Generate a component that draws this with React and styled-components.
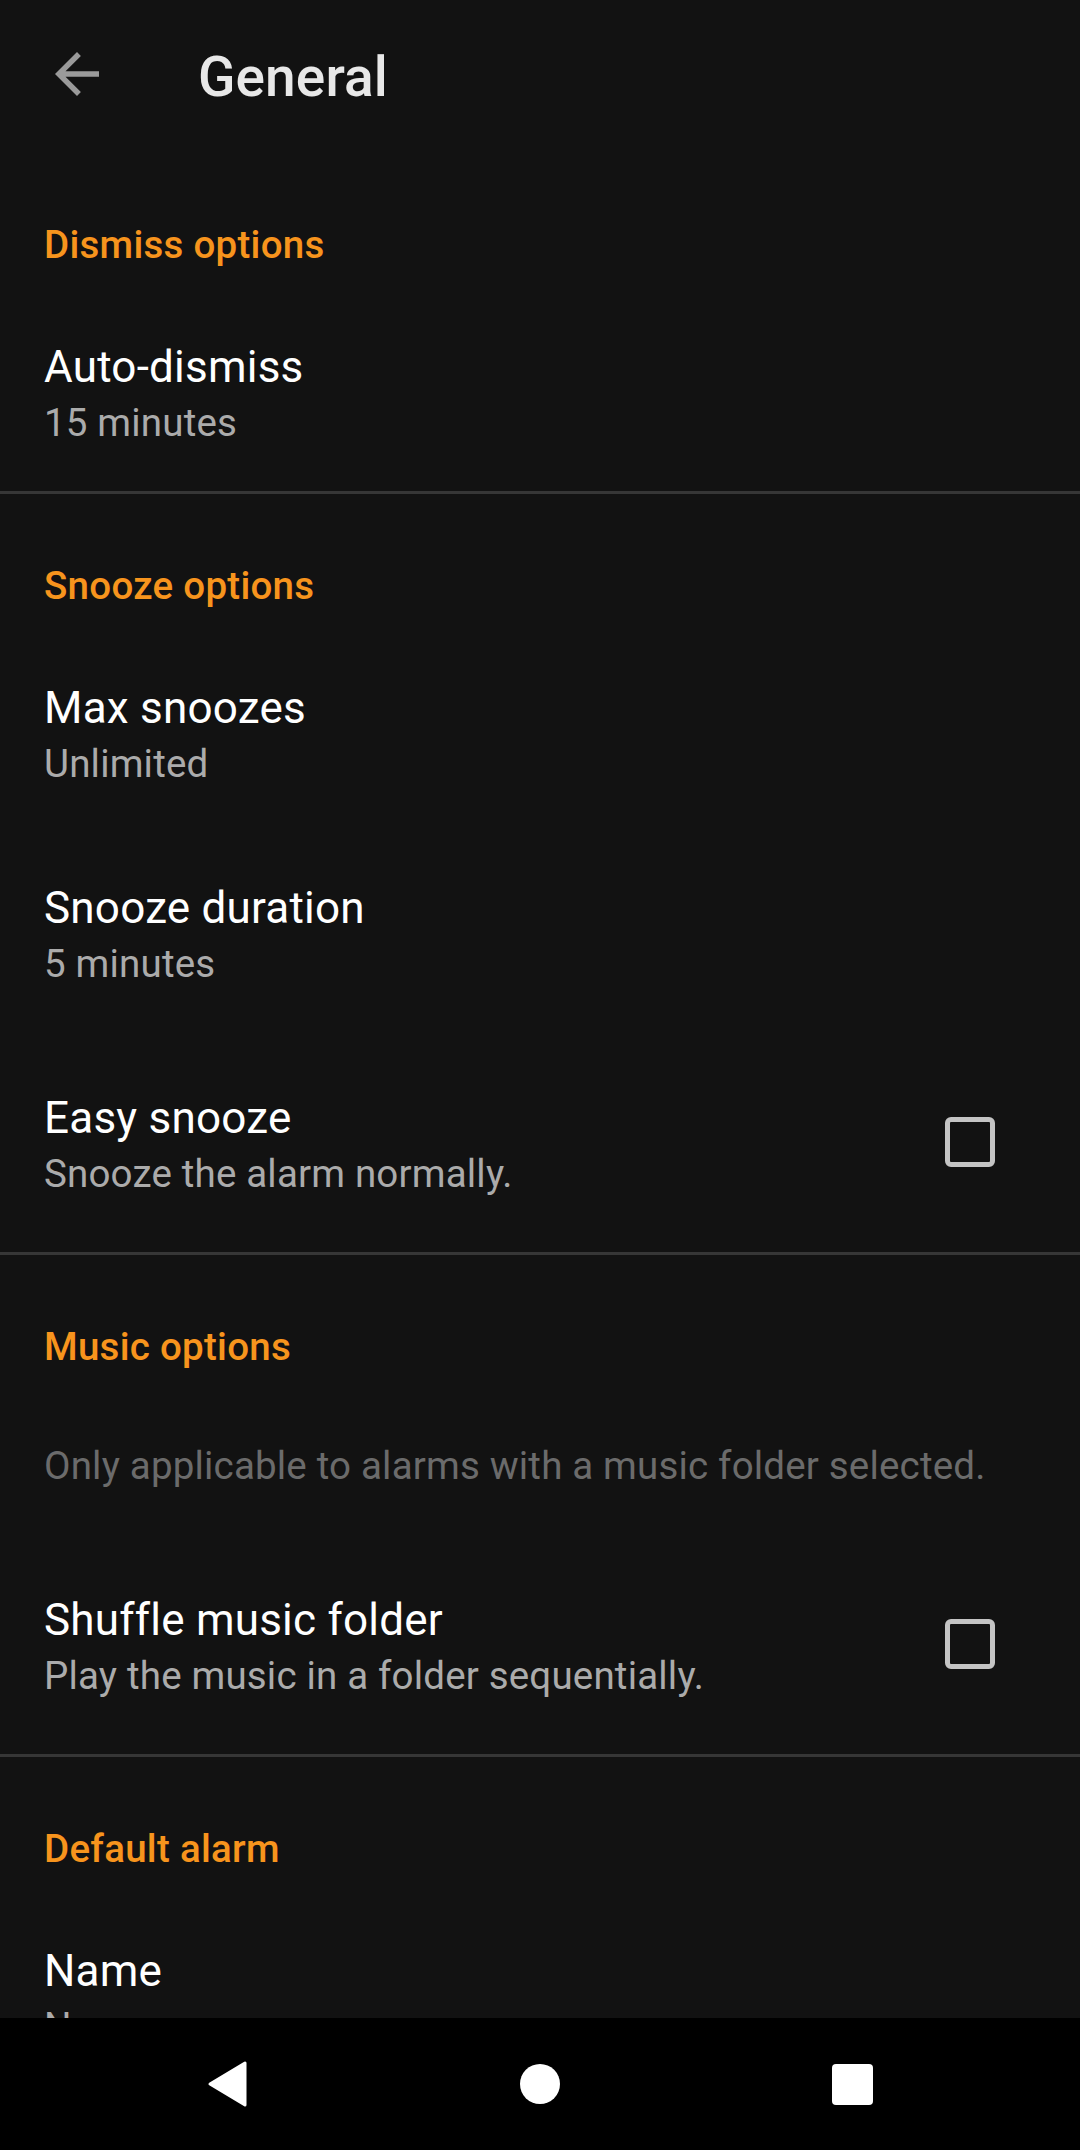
import React from "react";
import styled, { createGlobalStyle } from "styled-components";

const Global = createGlobalStyle`
  html, body { margin: 0; padding: 0; background: #121212; }
  body { font-family: Roboto, "Noto Sans", "Liberation Sans", sans-serif; }
  * { box-sizing: border-box; }
`;

const Screen = styled.div`
  width: 1080px;
  height: 2150px;
  display: flex;
  flex-direction: column;
  overflow: hidden;
  background: #121212;
`;

const Content = styled.div`
  flex: 1;
  overflow: hidden;
  display: flex;
  flex-direction: column;
`;

const Toolbar = styled.header`
  height: 153px;
  flex-shrink: 0;
  display: flex;
  align-items: center;
  padding-left: 44px;
`;

const BackButton = styled.div`
  width: 66px;
  height: 66px;
  margin-bottom: 6px;
  display: flex;
  align-items: center;
  justify-content: center;
  color: #9a9a9a;
`;

const ToolbarTitle = styled.h1`
  margin: 0 0 0 88px;
  font-family: Roboto, "Noto Sans", sans-serif;
  font-weight: 500;
  font-size: 55px;
  line-height: 64px;
  letter-spacing: 0.1px;
  color: #e8e8e8;
`;

const CategoryTitle = styled.div`
  padding: 69px 44px 23px 44px;
  font-weight: 500;
  font-size: 38.5px;
  line-height: 46px;
  letter-spacing: 0.27px;
  color: #f7941d;
`;

const Divider = styled.div`
  height: 3px;
  flex-shrink: 0;
  background: #363636;
`;

const Row = styled.div`
  display: flex;
  align-items: center;
  padding: 50px 85px 45px 44px;
  flex-shrink: 0;
`;

const TextCol = styled.div`
  flex: 1;
  display: flex;
  flex-direction: column;
`;

const ItemTitle = styled.div`
  font-size: 44px;
  line-height: 52px;
  letter-spacing: 0.22px;
  color: #ffffff;
`;

const Summary = styled.div`
  font-size: 38.5px;
  line-height: 46px;
  letter-spacing: 0.18px;
  margin-top: ${(p) => (p.$first ? "0" : "7px")};
  color: ${(p) => (p.$muted ? "#6b6b6b" : "#ababab")};
`;

const CheckSlot = styled.div`
  height: 125px;
  display: flex;
  align-items: center;
  padding-bottom: 5px;
`;

const CheckBox = styled.div`
  width: 50px;
  height: 50px;
  border: 5px solid #c4c4c4;
  border-radius: 6px;
`;

const NavBar = styled.nav`
  height: 132px;
  flex-shrink: 0;
  background: #000;
  display: flex;
  justify-content: center;
  align-items: center;
`;

const NavButton = styled.div`
  width: 312px;
  height: 132px;
  display: flex;
  align-items: center;
  justify-content: center;
`;

const HomeDot = styled.div`
  width: 40px;
  height: 40px;
  border-radius: 50%;
  background: #fff;
`;

const RecentsSquare = styled.div`
  width: 41px;
  height: 41px;
  border-radius: 4px;
  background: #fff;
`;

function Pref({ title, summary, checkbox }) {
  return (
    <Row>
      <TextCol>
        <ItemTitle>{title}</ItemTitle>
        {summary && <Summary>{summary}</Summary>}
      </TextCol>
      {checkbox && (
        <CheckSlot>
          <CheckBox />
        </CheckSlot>
      )}
    </Row>
  );
}

export default function App() {
  return (
    <>
      <Global />
      <Screen>
        <Content>
          <Toolbar>
            <BackButton>
              <svg width="66" height="66" viewBox="0 0 24 24" fill="currentColor">
                <path d="M20 11H7.83l5.59-5.59L12 4l-8 8 8 8 1.41-1.41L7.83 13H20v-2z" />
              </svg>
            </BackButton>
            <ToolbarTitle>General</ToolbarTitle>
          </Toolbar>

          <CategoryTitle>Dismiss options</CategoryTitle>
          <Pref title="Auto-dismiss" summary="15 minutes" />
          <Divider />

          <CategoryTitle>Snooze options</CategoryTitle>
          <Pref title="Max snoozes" summary="Unlimited" />
          <Pref title="Snooze duration" summary="5 minutes" />
          <Pref title="Easy snooze" summary="Snooze the alarm normally." checkbox />
          <Divider />

          <CategoryTitle>Music options</CategoryTitle>
          <Row>
            <TextCol>
              <Summary $first $muted>
                Only applicable to alarms with a music folder selected.
              </Summary>
            </TextCol>
          </Row>
          <Pref title="Shuffle music folder" summary="Play the music in a folder sequentially." checkbox />
          <Divider />

          <CategoryTitle>Default alarm</CategoryTitle>
          <Pref title="Name" summary="None" />
        </Content>
        <NavBar>
          <NavButton>
            <svg width="42" height="48" viewBox="0 0 42 48">
              <path d="M38 3 L38 45 L3 24 Z" fill="#fff" stroke="#fff" strokeWidth="3" strokeLinejoin="round" />
            </svg>
          </NavButton>
          <NavButton>
            <HomeDot />
          </NavButton>
          <NavButton>
            <RecentsSquare />
          </NavButton>
        </NavBar>
      </Screen>
    </>
  );
}
